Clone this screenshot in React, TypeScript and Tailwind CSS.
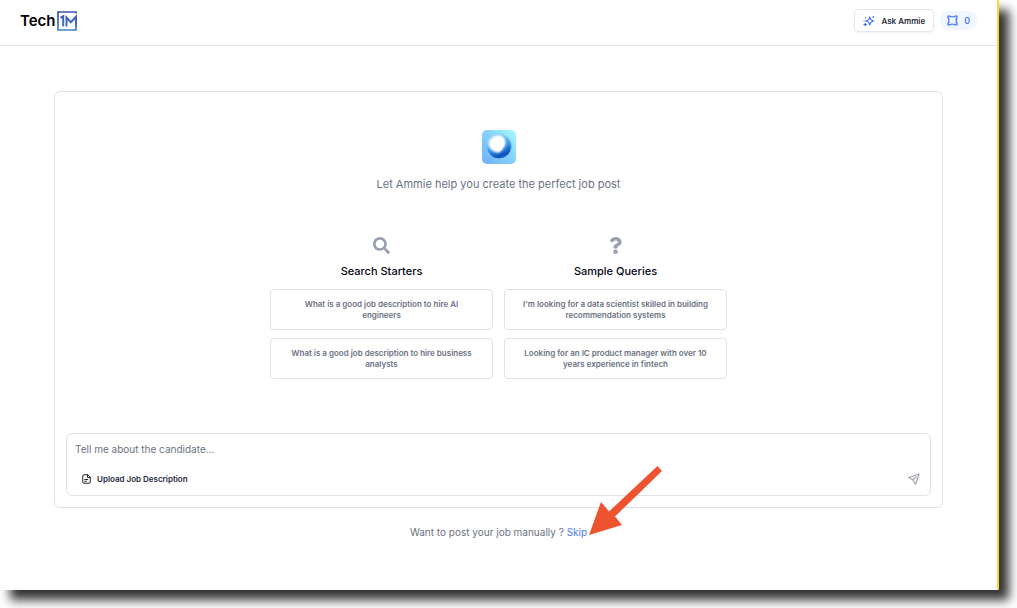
import { FaQuestion, FaSearch } from "react-icons/fa";
import type { ReactNode } from "react";

function Logo() {
  return (
    <a href="#" aria-label="Tech1M" className="flex items-center gap-px text-black">
      <span className="text-[15px] leading-5 font-semibold">Tech</span>
      <svg width="20" height="20" viewBox="0 0 20 20" aria-hidden="true">
        <defs>
          <linearGradient id="logo" x1="0" y1="0" x2="0" y2="20" gradientUnits="userSpaceOnUse">
            <stop offset="0" stopColor="#3d4db0" />
            <stop offset="1" stopColor="#3f83cf" />
          </linearGradient>
        </defs>
        <path d="M19 2.600V1H1v18h18V7" fill="none" stroke="url(#logo)" strokeWidth="1.700" />
        <path d="M3.500 6.800 6.200 5.200V15.400M9.500 15.400V6.500l4.300 4.700L19 5.800V15" fill="none" stroke="url(#logo)" strokeWidth="2" />
      </svg>
    </a>
  );
}

function SparkleIcon() {
  return (
    <svg width="12" height="12" viewBox="0 0 24 24" fill="none" stroke="#3b6cf0" strokeWidth="2.400" strokeLinejoin="round" strokeLinecap="round" aria-hidden="true">
      <path d="M13.500 4c.8 5.300 2.700 7.200 8 8-5.300.8-7.200 2.700-8 8-.8-5.300-2.700-7.200-8-8 5.300-.8 7.200-2.700 8-8Z" />
      <path d="M20.500 2.500v2.500M4.500 16.500v5M2 19h5M5 5v.5M2 12h.5" />
    </svg>
  );
}

function TokenIcon() {
  return (
    <svg width="11" height="11" viewBox="0 0 22 22" fill="none" stroke="#3b6cf0" strokeWidth="2.400" strokeLinejoin="round" strokeLinecap="round" aria-hidden="true">
      <path d="M2 2h3.500l1.500 1.500h8L16.500 2H20v3.500L18.500 7v8l1.500 1.500V20h-3.500L15 18.500H7L5.500 20H2v-3.500L3.500 15V7L2 5.500Z" />
    </svg>
  );
}

function AmmieIcon() {
  return (
    <svg width="34" height="34" viewBox="0 0 34 34" aria-hidden="true">
      <defs>
        <linearGradient id="tile" x1="0" y1="1" x2="1" y2="0">
          <stop offset="0" stopColor="#6fb1f8" />
          <stop offset="0.5" stopColor="#82cffb" />
          <stop offset="1" stopColor="#a4fbff" />
        </linearGradient>
        <linearGradient id="orb" x1="0.3" y1="0" x2="0.7" y2="1">
          <stop offset="0" stopColor="#a5e6ff" />
          <stop offset="0.5" stopColor="#3b9cf0" />
          <stop offset="0.85" stopColor="#0b4fb8" />
          <stop offset="1" stopColor="#2a8cf0" />
        </linearGradient>
        <filter id="glow" x="-30%" y="-30%" width="160%" height="160%">
          <feGaussianBlur stdDeviation="1.100" />
        </filter>
      </defs>
      <rect width="34" height="34" rx="5" fill="url(#tile)" />
      <circle cx="17" cy="16.500" r="12.500" fill="url(#orb)" stroke="#8fc4f7" strokeWidth="1" />
      <path d="M8 10c3-5 11-6 14-2 3 4 1 9-2 12-3 4-8 3-11-1-3-3-3-6-1-9Z" fill="#fff" filter="url(#glow)" />
      <path d="M10 10c3-3 9-4 11-1 3 4 1 7-1 10-2 3-6 2-8-1-2-2-4-5-2-8Z" fill="#fff" />
    </svg>
  );
}

function FileIcon() {
  return (
    <svg width="9" height="10" viewBox="0 0 18 20" fill="none" stroke="#27272a" strokeWidth="2" strokeLinejoin="round" strokeLinecap="round" aria-hidden="true">
      <path d="M11 1.500H4A2.500 2.500 0 0 0 1.500 4v12A2.500 2.500 0 0 0 4 18.500h10a2.500 2.500 0 0 0 2.500-2.500V7ZM11 1.500V7h5.500M5.500 11h6M5.500 14.500h3.500" />
    </svg>
  );
}

function SendIcon() {
  return (
    <svg width="12" height="12" viewBox="0 0 24 24" fill="none" stroke="#9ca3af" strokeWidth="2.400" strokeLinejoin="round" strokeLinecap="round" aria-hidden="true">
      <path d="M22 2 1.500 9l8 4.500L15 22.500ZM9.500 13.500 16 8" />
    </svg>
  );
}

function Column({ icon, title, items }: { icon: ReactNode; title: string; items: string[] }) {
  return (
    <section className="flex flex-1 flex-col items-center">
      <div className="flex h-[18px] items-center text-[17px] text-gray-400">{icon}</div>
      <h2 className="mt-[9px] text-[11px] leading-4 font-medium text-gray-950">{title}</h2>
      <div className="mt-2.5 flex w-full flex-col gap-2">
        {items.map((item) => (
          <button
            key={item}
            type="button"
            className="min-h-[41px] rounded border border-[#dfe1e6] px-3.5 text-[8px] leading-[11px] font-semibold text-gray-500"
          >
            {item}
          </button>
        ))}
      </div>
    </section>
  );
}

export default function App() {
  return (
    <div className="min-h-screen bg-white pr-[18px] pb-[18px] font-['Inter',sans-serif]">
      <div className="flex min-h-[calc(100vh-18px)] flex-col border-r-2 border-[#fbd537] bg-white shadow-[10px_10px_10px_#333]">
        <header className="flex h-[46px] items-center justify-between border-b border-[#dfe1e6] px-5 pb-1">
          <Logo />
          <div className="flex items-center gap-1.5">
            <button
              type="button"
              className="flex h-[23px] items-center gap-1.5 rounded border border-gray-200 px-2 text-[8px] font-semibold text-gray-800 shadow-xs"
            >
              <SparkleIcon />
              Ask Ammie
            </button>
            <div className="flex h-[19px] items-center gap-1.5 rounded-full bg-blue-50 px-[7px] text-[9px] font-medium text-[#3b6cf0]">
              <TokenIcon />0
            </div>
          </div>
        </header>

        <main className="px-[54px] pt-[45px]">
          <div className="flex flex-col items-center rounded-md border border-[#dfe1e6] px-[11px] pt-[38px] pb-[11px]">
            <AmmieIcon />
            <h1 className="mt-3 text-[11px] leading-4 text-gray-500">Let Ammie help you create the perfect job post</h1>

            <div className="mt-11 flex w-full max-w-[457px] gap-[11px]">
              <Column
                icon={<FaSearch />}
                title="Search Starters"
                items={["What is a good job description to hire AI engineers", "What is a good job description to hire business analysts"]}
              />
              <Column
                icon={<FaQuestion />}
                title="Sample Queries"
                items={[
                  "I'm looking for a data scientist skilled in building recommendation systems",
                  "Looking for an IC product manager with over 10 years experience in fintech",
                ]}
              />
            </div>

            <form className="mt-[54px] w-full rounded-md border border-[#dfe1e6] px-2 pt-2 pb-[5px]">
              <textarea
                rows={1}
                aria-label="Tell me about the candidate"
                placeholder="Tell me about the candidate..."
                className="block h-[26px] w-full resize-none text-[10px] leading-[15px] text-gray-800 outline-none placeholder:text-gray-500"
              />
              <div className="flex items-center justify-between pr-0.5 pl-[7px]">
                <button type="button" className="flex h-[22px] items-center gap-1.5 text-[8px] font-semibold text-gray-800">
                  <FileIcon />
                  Upload Job Description
                </button>
                <button type="submit" aria-label="Send">
                  <SendIcon />
                </button>
              </div>
            </form>
          </div>

          <div className="mt-4 text-center text-[10px] leading-4 text-gray-500">
            Want to post your job manually ?{" "}
            <a href="#" className="relative text-[#4a7df5]">
              Skip
              <svg className="absolute bottom-0.5 left-full ml-px h-[70px] w-[74px] max-w-none" viewBox="0 0 74 70" aria-hidden="true">
                <path d="M1 69 13 36l8 9.500L69.500 0l4.500 5L27 50.500l7 8.500Z" fill="#ee5330" />
              </svg>
            </a>
          </div>
        </main>
      </div>
    </div>
  );
}
